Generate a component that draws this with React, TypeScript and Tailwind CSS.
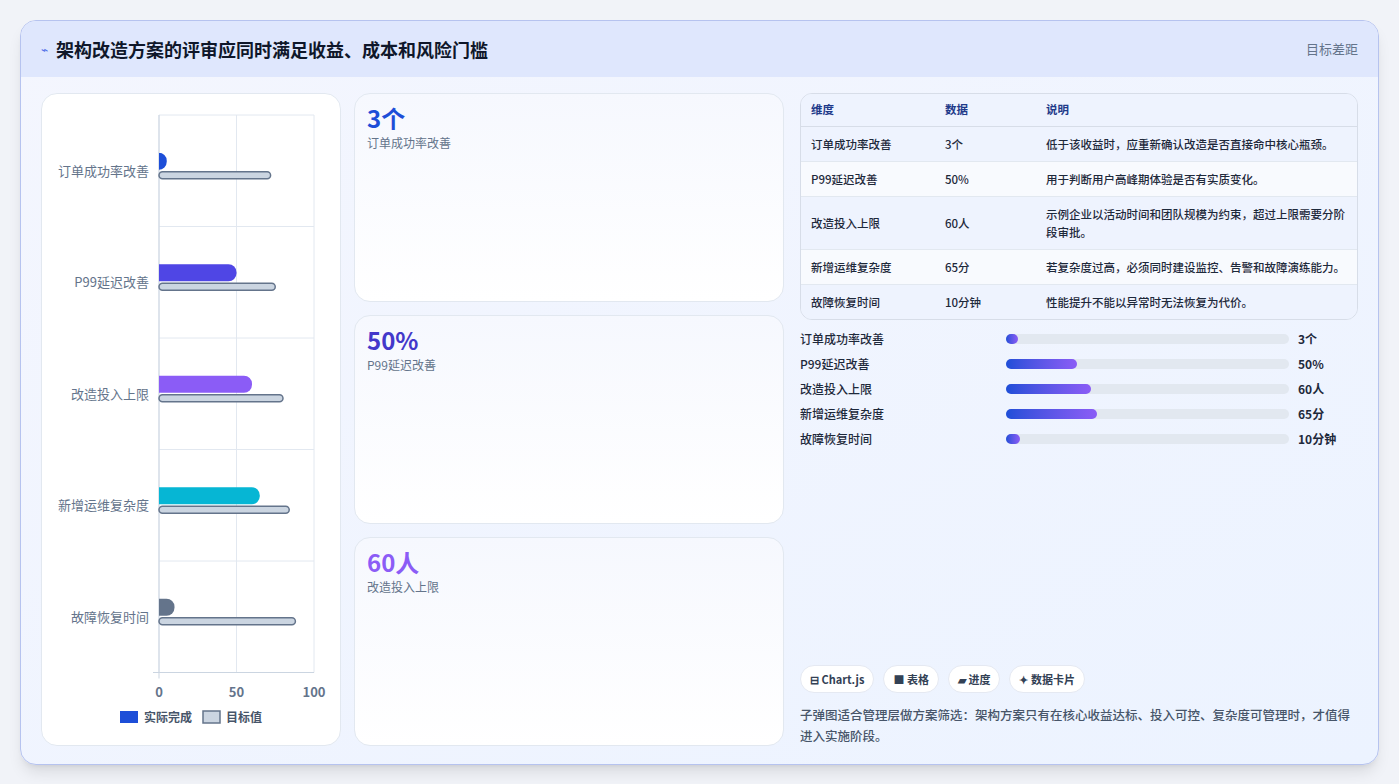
import React from 'react';

const font = { fontFamily: '"Noto Sans CJK SC", "Noto Sans", sans-serif' };

const rows = [
  { name: '订单成功率改善', value: '3个', note: '低于该收益时，应重新确认改造是否直接命中核心瓶颈。', actual: 5, target: 72, color: '#1d4ed8', pct: 4 },
  { name: 'P99延迟改善', value: '50%', note: '用于判断用户高峰期体验是否有实质变化。', actual: 50, target: 75, color: '#4f46e5', pct: 25 },
  { name: '改造投入上限', value: '60人', note: '示例企业以活动时间和团队规模为约束，超过上限需要分阶段审批。', actual: 60, target: 80, color: '#8b5cf6', pct: 30 },
  { name: '新增运维复杂度', value: '65分', note: '若复杂度过高，必须同时建设监控、告警和故障演练能力。', actual: 65, target: 84, color: '#06b6d4', pct: 32 },
  { name: '故障恢复时间', value: '10分钟', note: '性能提升不能以异常时无法恢复为代价。', actual: 10, target: 88, color: '#64748b', pct: 5 },
];

function Chart() {
  const x0 = 117, w = 155, top = 21, band = 111.5;
  return (
    <svg width="298" height="651" className="block">
      {[0, 50, 100].map((v) => (
        <line key={v} x1={x0 + (v / 100) * w} x2={x0 + (v / 100) * w} y1={top} y2={top + band * 5} stroke="#e2e8f0" />
      ))}
      {[0, 1, 2, 3, 4, 5].map((i) => (
        <line key={i} x1={x0} x2={x0 + w} y1={top + i * band} y2={top + i * band} stroke="#e2e8f0" />
      ))}
      <line x1={x0} x2={x0} y1={top} y2={top + band * 5 + 6} stroke="#cbd5e1" />
      <line x1={x0 - 6} x2={x0 + w} y1={top + band * 5} y2={top + band * 5} stroke="#cbd5e1" />
      {rows.map((r, i) => {
        const cy = top + band * i + band / 2;
        return (
          <g key={r.name}>
            <text x={x0 - 10} y={cy + 5} textAnchor="end" fontSize="13" fill="#64748b" style={font}>{r.name}</text>
            <path d={`M${x0} ${cy - 18} H${x0 + (r.actual / 100) * w - 8} a8 8 0 0 1 8 8 v1 a8 8 0 0 1 -8 8 H${x0} Z`} fill={r.color} />
            <rect x={x0} y={cy + 1} width={(r.target / 100) * w} height={7} rx={3.5} fill="#cbd5e1" stroke="#64748b" strokeWidth="1.5" />
          </g>
        );
      })}
      {[0, 50, 100].map((v) => (
        <text key={v} x={x0 + (v / 100) * w} y={top + band * 5 + 24} textAnchor="middle" fontSize="13" fontWeight="700" fill="#64748b" style={font}>{v}</text>
      ))}
      <rect x="78" y="617" width="18" height="12" fill="#1d4ed8" />
      <text x="102" y="628" fontSize="12" fontWeight="700" fill="#475569" style={font}>实际完成</text>
      <rect x="161" y="617" width="17" height="12" fill="#cbd5e1" stroke="#64748b" strokeWidth="1.5" />
      <text x="184" y="628" fontSize="12" fontWeight="700" fill="#475569" style={font}>目标值</text>
    </svg>
  );
}

export default function App() {
  const cards = [
    { v: '3个', label: '订单成功率改善', c: 'text-[#1d4ed8]' },
    { v: '50%', label: 'P99延迟改善', c: 'text-[#4338ca]' },
    { v: '60人', label: '改造投入上限', c: 'text-[#8b5cf6]' },
  ];
  return (
    <div className="w-[1399px] h-[784px] bg-[#f1f3f8] p-5" style={font}>
      <div className="h-[745px] rounded-2xl border border-[#b6c3ef] overflow-hidden bg-gradient-to-br from-[#f4f6fe] to-[#ecf3ff] shadow-lg flex flex-col">
        <div className="h-14 shrink-0 bg-[#dfe7fd] flex items-center justify-between px-5">
          <div className="flex items-center gap-2">
            <span className="text-[#4f6ee8] text-xs">⌁</span>
            <h1 className="text-[18px] font-bold text-[#0f172a]">架构改造方案的评审应同时满足收益、成本和风险门槛</h1>
          </div>
          <span className="text-[13px] text-[#64748b]">目标差距</span>
        </div>
        <div className="flex-1 flex gap-[13px] px-5 pt-[16px] pb-[19px]">
          <div className="w-[300px] shrink-0 bg-white rounded-2xl border border-[#e2e8f0]">
            <Chart />
          </div>
          <div className="w-[430px] shrink-0 flex flex-col gap-[13px]">
            {cards.map((c) => (
              <div key={c.v} className="flex-1 rounded-2xl border border-[#e2e8f0] bg-gradient-to-b from-[#f6f8fe] to-white px-[12px] pt-[8px]">
                <div className={`text-[24px] font-bold leading-8 ${c.c}`}>{c.v}</div>
                <div className="text-[12px] text-[#64748b]">{c.label}</div>
              </div>
            ))}
          </div>
          <div className="flex-1 flex flex-col pl-[3px]">
            <div className="rounded-xl border border-[#d7dde8] overflow-hidden text-[11.5px] text-[#1e293b]">
              <div className="flex h-[33px] items-center bg-[#eef3fe] font-bold text-[#1e3a8a] border-b border-[#d7dde8]">
                <div className="w-[144px] pl-[10px]">维度</div>
                <div className="w-[101px]">数据</div>
                <div className="flex-1">说明</div>
              </div>
              {rows.map((r, i) => (
                <div key={r.name} className={`flex items-center py-[8px] leading-[18px] ${i % 2 === 0 ? 'bg-[#eef3fe]' : 'bg-[#f8fafe]'} ${i < 4 ? 'border-b border-[#e2e8f0]' : ''}`}>
                  <div className="w-[144px] pl-[10px] font-medium">{r.name}</div>
                  <div className="w-[101px] font-medium">{r.value}</div>
                  <div className="flex-1 pr-2 font-medium">{r.note}</div>
                </div>
              ))}
            </div>
            <div className="mt-[10px] flex flex-col gap-[7px] text-[12px] text-[#1e293b]">
              {rows.map((r) => (
                <div key={r.name} className="flex items-center h-[18px]">
                  <div className="w-[206px] font-medium">{r.name}</div>
                  <div className="w-[283px] h-[10px] rounded-full bg-[#e2e8f0]">
                    <div className="h-full rounded-full bg-gradient-to-r from-[#1d4ed8] to-[#8b5cf6] min-w-3" style={{ width: `${r.pct}%` }} />
                  </div>
                  <div className="ml-[9px] font-bold">{r.value}</div>
                </div>
              ))}
            </div>
            <div className="flex-1" />
            <div className="flex gap-[9px] text-[11px] font-bold text-[#334155]">
              <span className="bg-white rounded-full border border-[#e5e9f2] px-[9px] h-7 flex items-center">⊟ Chart.js</span>
              <span className="bg-white rounded-full border border-[#e5e9f2] px-[9px] h-7 flex items-center">■ 表格</span>
              <span className="bg-white rounded-full border border-[#e5e9f2] px-[9px] h-7 flex items-center">▰ 进度</span>
              <span className="bg-white rounded-full border border-[#e5e9f2] px-[9px] h-7 flex items-center">✦ 数据卡片</span>
            </div>
            <p className="mt-[11px] text-[12.5px] font-medium leading-[21px] text-[#475569]">子弹图适合管理层做方案筛选：架构方案只有在核心收益达标、投入可控、复杂度可管理时，才值得进入实施阶段。</p>
          </div>
        </div>
      </div>
    </div>
  );
}
